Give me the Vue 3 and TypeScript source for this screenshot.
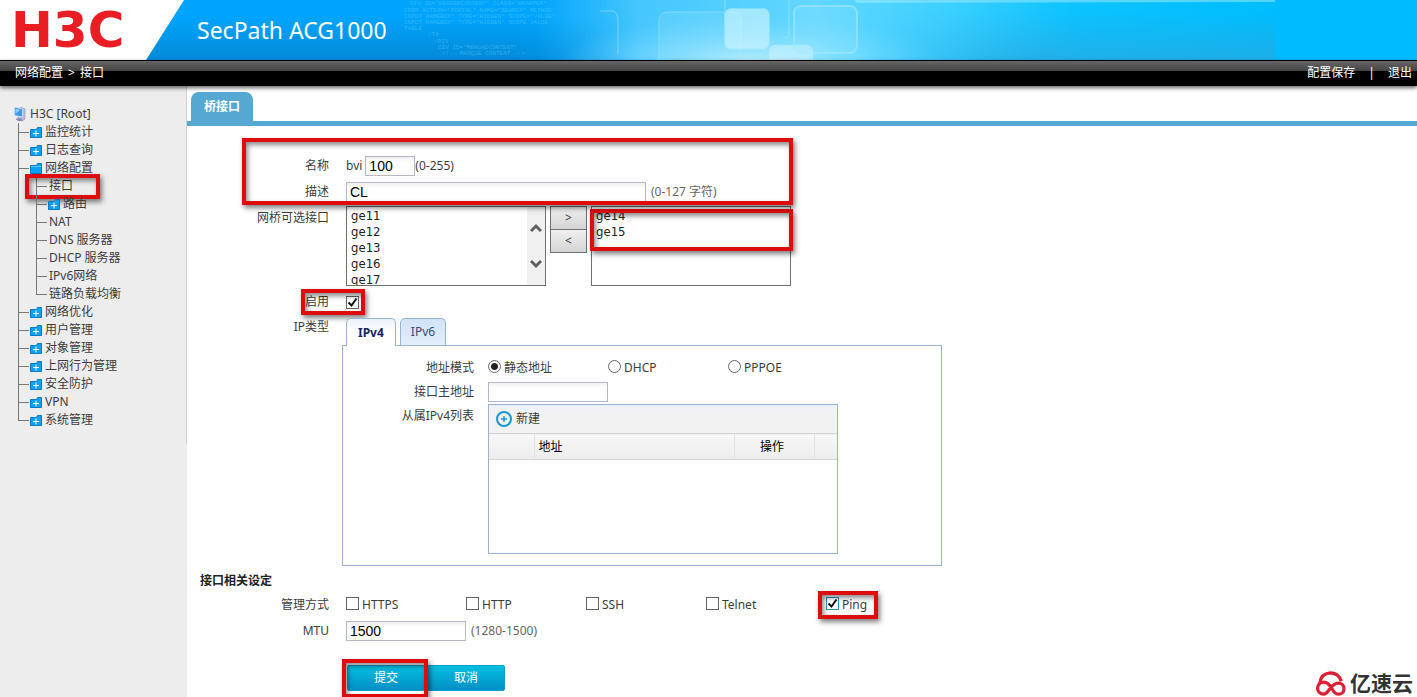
<script setup lang="ts">
import { ref } from 'vue'

interface TreeNode {
  label: string
  folder: boolean
  open?: boolean
  marked?: boolean
  children?: TreeNode[]
}

const tree: TreeNode[] = [
  { label: '监控统计', folder: true },
  { label: '日志查询', folder: true },
  {
    label: '网络配置',
    folder: true,
    open: true,
    children: [
      { label: '接口', folder: false, marked: true },
      { label: '路由', folder: true },
      { label: 'NAT', folder: false },
      { label: 'DNS 服务器', folder: false },
      { label: 'DHCP 服务器', folder: false },
      { label: 'IPv6网络', folder: false },
      { label: '链路负载均衡', folder: false },
    ],
  },
  { label: '网络优化', folder: true },
  { label: '用户管理', folder: true },
  { label: '对象管理', folder: true },
  { label: '上网行为管理', folder: true },
  { label: '安全防护', folder: true },
  { label: 'VPN', folder: true },
  { label: '系统管理', folder: true },
]

const bridgeId = ref('100')
const description = ref('CL')
const available = ['ge11', 'ge12', 'ge13', 'ge16', 'ge17']
const selected = ['ge14', 'ge15']
const enabled = ref(true)
const ipTab = ref('IPv4')
const modes = ['静态地址', 'DHCP', 'PPPOE']
const mode = ref('静态地址')
const primaryAddress = ref('')
const services = ['HTTPS', 'HTTP', 'SSH', 'Telnet', 'Ping']
const activeServices = ref<string[]>(['Ping'])
const mtu = ref('1500')
</script>

<template>
  <div class="page">
    <header class="banner">
      <svg class="art" viewBox="0 0 1275 60" width="1275" height="60" aria-hidden="true">
        <defs>
          <linearGradient id="sky" x1="0" x2="1" y1="0" y2="0">
            <stop offset="0" stop-color="#00a4fc" />
            <stop offset=".42" stop-color="#00a4fc" />
            <stop offset=".5" stop-color="#45c6fd" />
            <stop offset=".64" stop-color="#62d7ff" />
            <stop offset=".74" stop-color="#3dd0ff" />
            <stop offset=".84" stop-color="#0cc3ff" />
            <stop offset="1" stop-color="#00bdfd" />
          </linearGradient>
          <linearGradient id="shade" x1="0" x2="0" y1="0" y2="1">
            <stop offset=".3" stop-color="#0678bd" stop-opacity="0" />
            <stop offset="1" stop-color="#0678bd" stop-opacity=".6" />
          </linearGradient>
          <linearGradient id="shadeRight" x1="0" x2="0" y1="0" y2="1">
            <stop offset=".2" stop-color="#2aa7df" stop-opacity="0" />
            <stop offset="1" stop-color="#2aa7df" stop-opacity=".7" />
          </linearGradient>
          <radialGradient id="glow">
            <stop offset="0" stop-color="#c9f3fb" stop-opacity=".85" />
            <stop offset="1" stop-color="#7bdcff" stop-opacity="0" />
          </radialGradient>
          <linearGradient id="fade" x1="0" x2="1" y1="0" y2="0">
            <stop offset="0" stop-color="#fff" />
            <stop offset=".8" stop-color="#fff" />
            <stop offset="1" stop-color="#000" />
          </linearGradient>
          <linearGradient id="fadeIn" x1="0" x2="1" y1="0" y2="0">
            <stop offset="0" stop-color="#000" />
            <stop offset=".4" stop-color="#fff" />
          </linearGradient>
          <mask id="leftMask"><rect width="640" height="60" fill="url(#fade)" /></mask>
          <mask id="rightMask"><rect x="860" width="415" height="60" fill="url(#fadeIn)" /></mask>
        </defs>
        <rect width="1275" height="60" fill="url(#sky)" />
        <rect width="640" height="60" fill="url(#shade)" mask="url(#leftMask)" />
        <rect x="860" width="415" height="60" fill="url(#shadeRight)" mask="url(#rightMask)" />
        <ellipse cx="750" cy="62" rx="190" ry="48" fill="url(#glow)" />
        <g fill="#a6eaff" fill-opacity=".18" stroke="#a6eaff" stroke-opacity=".55">
          <path d="M600 11h12q6 1 6 9v34" fill="none" />
          <rect x="659" y="12" width="82" height="70" rx="8" />
          <path d="M725 0v12M789 0v34q0 4-6 4" fill="none" />
          <rect x="725" y="9" width="44" height="40" rx="6" fill="#d6f6ff" fill-opacity=".6" stroke-width="2" />
          <rect x="769" y="45" width="44" height="36" rx="6" fill="#d6f6ff" fill-opacity=".5" />
          <rect x="794" y="6" width="63" height="47" rx="7" stroke-width="2" />
          <path d="M855 0q0 3 5 3l415-1V0z" stroke="none" fill-opacity=".5" />
        </g>
        <g class="code">
          <text x="410" y="5">DIV ID="HEADERCONTENT" CLASS="WRAPPER"</text>
          <text x="404" y="12">FORM ACTION="PORTAL" NAME="SEARCH" METHOD</text>
          <text x="404" y="18">INPUT NAMEBOX" TYPE="HIDDEN" SCOPE="VALUE"</text>
          <text x="404" y="24">INPUT NAMEBOX" TYPE="HIDDEN" SCOPE VALUE</text>
          <text x="404" y="30">TABLE</text>
          <text x="428" y="36">/TA</text>
          <text x="434" y="43">/DIV</text>
          <text x="438" y="49">DIV ID="MENUADCONTENT"</text>
          <text x="442" y="55">&lt;!-- MARQUE CONTENT --&gt;</text>
        </g>
      </svg>
      <div class="logo">H3C</div>
      <h1 class="product">SecPath ACG1000</h1>
    </header>

    <nav class="bar">
      <div class="crumbs"><span>网络配置</span><span>&gt;</span><span>接口</span></div>
      <div class="actions">
        <a href="#save">配置保存</a>
        <span class="divider">|</span>
        <a href="#logout">退出</a>
      </div>
    </nav>

    <div class="body">
      <aside class="side">
        <div class="side-inner">
          <div class="root">
            <svg width="14" height="16" viewBox="0 0 14 16" aria-hidden="true">
              <path d="M8 1l4 2v10l-3 2-4-2z" fill="#b9bdd6" stroke="#8a90b4" stroke-width=".6" />
              <path d="M1.500 1.500l8 1v8.500l-8-1.500z" fill="#3f96ee" stroke="#c5d8f2" />
              <path d="M2.500 3l5 .7-5 4z" fill="#91ccff" />
              <path d="M4 12l4 .5 2 2-4 .8-3-1.500z" fill="#8788c0" />
            </svg>
            <a href="#root">H3C [Root]</a>
          </div>
          <ul class="tree">
            <li v-for="node in tree" :key="node.label">
              <div class="node">
                <svg class="folder" width="12" height="11" viewBox="0 0 12 11" aria-hidden="true">
                  <path d="M.5 2.500h6l1-2h4v10H.5z" fill="#0ba2f5" stroke="#0779c8" />
                  <path v-if="!node.open" d="M3 6.500h6M6 3.500v6" stroke="#fff" />
                  <path v-else d="M1 3.500h10" stroke="#5bc9ff" />
                </svg>
                <a href="#node">{{ node.label }}</a>
              </div>
              <ul v-if="node.children" class="tree sub">
                <li v-for="child in node.children" :key="child.label">
                  <div class="node" :class="{ leaf: !child.folder }">
                    <svg v-if="child.folder" class="folder" width="12" height="11" viewBox="0 0 12 11" aria-hidden="true">
                      <path d="M.5 2.500h6l1-2h4v10H.5z" fill="#0ba2f5" stroke="#0779c8" />
                      <path d="M3 6.500h6M6 3.500v6" stroke="#fff" />
                    </svg>
                    <a href="#node">{{ child.label }}</a>
                    <span v-if="child.marked" class="mark mark-node"></span>
                  </div>
                </li>
              </ul>
            </li>
          </ul>
        </div>
      </aside>

      <main class="main">
        <div class="tabbar"><button type="button" class="page-tab">桥接口</button></div>

        <form class="form" @submit.prevent>
          <div class="identity">
            <span class="mark mark-identity"></span>
            <div class="row">
              <label class="label" for="bvi">名称</label>
              <div class="field">
                <span class="prefix">bvi</span>
                <input id="bvi" v-model="bridgeId" class="text small" type="text" />
                <span>(0-255)</span>
              </div>
            </div>
            <div class="row">
              <label class="label" for="desc">描述</label>
              <div class="field">
                <input id="desc" v-model="description" class="text wide" type="text" />
                <span class="hint">(0-127 字符)</span>
              </div>
            </div>
          </div>

          <div class="row top lists">
            <label class="label" for="available">网桥可选接口</label>
            <div class="field top">
              <div class="listbox">
                <select id="available" multiple size="4">
                  <option v-for="port in available" :key="port">{{ port }}</option>
                </select>
                <div class="scroll" aria-hidden="true">
                  <svg width="12" height="10" viewBox="0 0 12 10"><path d="M1 8l5-5 5 5" /></svg>
                  <svg width="12" height="10" viewBox="0 0 12 10"><path d="M1 2l5 5 5-5" /></svg>
                </div>
              </div>
              <div class="movers">
                <button type="button" aria-label="添加">&gt;</button>
                <button type="button" aria-label="移除">&lt;</button>
              </div>
              <div class="listbox">
                <select aria-label="已选接口" multiple size="4">
                  <option v-for="port in selected" :key="port">{{ port }}</option>
                </select>
                <span class="mark mark-selected"></span>
              </div>
            </div>
          </div>

          <div class="row enable">
            <label class="label" for="enabled">启用</label>
            <div class="field"><input id="enabled" v-model="enabled" type="checkbox" /></div>
            <span class="mark mark-enable"></span>
          </div>

          <div class="row top ip">
            <span class="label">IP类型</span>
            <div class="ip-box">
              <div class="ip-tabs">
                <button
                  v-for="name in ['IPv4', 'IPv6']"
                  :key="name"
                  type="button"
                  :class="{ active: ipTab === name }"
                  @click="ipTab = name"
                >{{ name }}</button>
              </div>
              <div class="panel">
                <div class="row inner">
                  <span class="label">地址模式</span>
                  <div class="field choices">
                    <label v-for="item in modes" :key="item">
                      <input v-model="mode" type="radio" name="mode" :value="item" /><span>{{ item }}</span>
                    </label>
                  </div>
                </div>
                <div class="row inner">
                  <label class="label" for="primary">接口主地址</label>
                  <div class="field"><input id="primary" v-model="primaryAddress" class="text medium" type="text" /></div>
                </div>
                <div class="row inner top">
                  <span class="label">从属IPv4列表</span>
                  <div class="grid">
                    <button type="button" class="create">
                      <svg width="16" height="16" viewBox="0 0 16 16" fill="none" stroke="#1798cc" aria-hidden="true">
                        <circle cx="8" cy="8" r="7" stroke-width="2" />
                        <path d="M5 8h6M8 5v6" stroke-width="1.500" />
                      </svg>
                      新建
                    </button>
                    <table>
                      <thead>
                        <tr>
                          <th class="c-index"></th>
                          <th class="c-address">地址</th>
                          <th class="c-action">操作</th>
                          <th></th>
                        </tr>
                      </thead>
                    </table>
                  </div>
                </div>
              </div>
            </div>
          </div>

          <h2 class="section">接口相关设定</h2>

          <div class="row">
            <span class="label">管理方式</span>
            <div class="field choices">
              <label v-for="item in services" :key="item">
                <input v-model="activeServices" type="checkbox" :value="item" /><span>{{ item }}</span>
                <span v-if="item === 'Ping'" class="mark mark-ping"></span>
              </label>
            </div>
          </div>
          <div class="row">
            <label class="label" for="mtu">MTU</label>
            <div class="field">
              <input id="mtu" v-model="mtu" class="text medium" type="text" />
              <span class="hint">(1280-1500)</span>
            </div>
          </div>

          <div class="buttons">
            <div class="submit">
              <button type="submit">提交</button>
              <span class="mark mark-submit"></span>
            </div>
            <button type="button">取消</button>
          </div>
        </form>
      </main>
    </div>

    <div class="watermark">
      <svg width="36" height="26" viewBox="0 0 36 28" fill="none" stroke="#dc1f35" stroke-width="3.500" aria-hidden="true">
        <path d="M6 13Q7 3 17 2q9 0 12 9" />
        <path d="M19 19q-4-7-9-7a6.500 6.500 0 1 0 0 13c6 0 7-12 16-12a6 6 0 1 1 0 12c-3 0-5-2-7-6" />
      </svg>
      <span>亿速云</span>
    </div>
  </div>
</template>

<style>
body {
  margin: 0;
  overflow: hidden;
}
</style>

<style scoped>
.page {
  position: relative;
  display: flex;
  flex-direction: column;
  height: 100vh;
  overflow: hidden;
  background: #fff;
  color: #3c3c3c;
  font: 12px/18px "Noto Sans", "Noto Sans CJK SC", sans-serif;
}
.page *,
.page *::before,
.page *::after {
  box-sizing: border-box;
}
button,
input,
select {
  font: inherit;
  color: inherit;
  margin: 0;
}
a {
  color: inherit;
  text-decoration: none;
}

.banner {
  position: relative;
  display: flex;
  flex: none;
  align-items: center;
  height: 60px;
  overflow: hidden;
  background: #00bbff;
}
.art {
  position: absolute;
  left: 0;
  top: 0;
}
.code {
  fill: #6fd2ff;
  fill-opacity: 0.45;
  font: 6px "Liberation Mono", monospace;
}
.logo {
  position: relative;
  width: 184px;
  height: 60px;
  padding-left: 11px;
  background: #fff;
  clip-path: polygon(0 0, 100% 0, 146px 100%, 0 100%);
  color: #ea1c24;
  font: bold 50px/60px "DejaVu Sans", sans-serif;
}
.product {
  position: relative;
  margin: 0 0 0 13px;
  color: #fff;
  font-size: 23px;
  font-weight: 400;
  line-height: 60px;
}

.bar {
  position: relative;
  z-index: 1;
  display: flex;
  flex: none;
  justify-content: space-between;
  height: 26px;
  padding: 3px 5px 0 15px;
  border-top: 1px solid #000;
  background: linear-gradient(#666, #444 10px, #000 10px);
  box-shadow: 0 2px 4px rgba(0, 0, 0, 0.6);
  color: #fff;
}
.crumbs {
  display: flex;
  gap: 5px;
}
.actions {
  display: flex;
  gap: 13px;
}

.body {
  display: flex;
  flex: 1;
  min-height: 0;
}
.side {
  flex: none;
  width: 187px;
  background: #ededed;
}
.side-inner {
  height: 358px;
  padding: 19px 0 0 13px;
  border-right: 1px solid #d0d0d0;
}
.root {
  display: flex;
  align-items: center;
  gap: 3px;
  height: 18px;
}
.tree {
  margin: 0 0 0 5px;
  padding: 0;
  list-style: none;
}
.tree li {
  position: relative;
  padding-left: 12px;
}
.tree li::before {
  content: "";
  position: absolute;
  left: 0;
  top: 0;
  bottom: 0;
  border-left: 1px solid #777;
}
.tree li:last-child::before {
  bottom: auto;
  height: 9px;
}
.tree li::after {
  content: "";
  position: absolute;
  left: 0;
  top: 9px;
  width: 11px;
  border-top: 1px solid #777;
}
.tree.sub {
  margin-left: 6px;
}
.node {
  position: relative;
  display: flex;
  align-items: center;
  gap: 3px;
  height: 18px;
}
.leaf {
  padding-left: 1px;
}

.main {
  flex: 1;
  min-width: 0;
}
.tabbar {
  height: 40px;
  padding: 6px 4px 0;
  border-bottom: 5px solid #56a8d2;
}
.page-tab {
  display: block;
  width: 62px;
  height: 30px;
  padding: 0;
  border: 0;
  border-radius: 8px 8px 0 0;
  background: #56a8d2;
  color: #fff;
  font-weight: 700;
}

.form {
  padding-top: 27px;
}
.row {
  position: relative;
  display: flex;
  align-items: center;
  gap: 17px;
  min-height: 26px;
}
.row.top,
.field.top {
  align-items: flex-start;
}
.label {
  flex: none;
  width: 142px;
  text-align: right;
}
.field {
  display: flex;
  align-items: center;
}
.identity {
  position: relative;
}
.prefix {
  margin-right: 3px;
}
.hint {
  margin-left: 5px;
  color: #666;
}
.text {
  height: 20px;
  padding: 0 3px;
  border: 1px solid #b5b8c8;
  background: linear-gradient(#f0f0f2, #fff 5px);
  color: #000;
  font: 14px/18px "Liberation Sans", Arial, sans-serif;
}
.small {
  width: 50px;
}
.medium {
  width: 120px;
}
.wide {
  width: 300px;
}

.lists {
  padding-top: 1px;
}
.lists .label,
.inner.top .label {
  padding-top: 3px;
}
.listbox {
  position: relative;
  display: flex;
  width: 200px;
  height: 80px;
  border: 1px solid #707070;
  background: #fff;
}
.listbox select {
  flex: 1;
  min-width: 0;
  height: 78px;
  padding: 1px;
  border: 0;
  outline: 0;
  overflow: hidden;
  background: transparent;
  color: #222;
  font: 13px/16px "DejaVu Sans Condensed", "DejaVu Sans", sans-serif;
}
.listbox option {
  min-height: 16px;
  padding: 0 3px;
}
.scroll {
  display: flex;
  flex-direction: column;
  align-items: center;
  justify-content: center;
  gap: 26px;
  width: 18px;
  background: #f0f0f0;
}
.scroll path {
  fill: none;
  stroke: #606060;
  stroke-width: 3;
}
.movers {
  display: flex;
  flex-direction: column;
  width: 37px;
  margin: 0 4px;
}
.movers button {
  height: 24px;
  padding: 0;
  border: 1px solid #707070;
  background: linear-gradient(#f0f0f0, #d4d4d4);
}
.movers button + button {
  margin-top: -1px;
}
.enable {
  margin-top: 3px;
}

input[type="checkbox"],
input[type="radio"] {
  flex: none;
  width: 13px;
  height: 13px;
  appearance: none;
  border: 1px solid #666;
  background: #fff;
}
input[type="checkbox"]:checked {
  background: #fff
    url("data:image/svg+xml,%3Csvg xmlns='http://www.w3.org/2000/svg' viewBox='0 0 11 11'%3E%3Cpath d='M1.500 5.500l3 3 5-7' fill='none' stroke='%23111' stroke-width='2'/%3E%3C/svg%3E");
}
input[type="radio"] {
  border-radius: 50%;
}
input[type="radio"]:checked {
  background: radial-gradient(circle, #222 3px, #fff 4px);
}
.choices label {
  position: relative;
  display: flex;
  align-items: center;
  gap: 3px;
  width: 120px;
}
.choices input {
  margin-bottom: 3px;
}
.choices input[type="checkbox"]:checked {
  border-color: #2a93c9;
}

.ip {
  gap: 13px;
  margin-top: 3px;
}
.ip-box {
  width: 600px;
}
.ip-tabs {
  display: flex;
  gap: 4px;
  padding-left: 4px;
}
.ip-tabs button {
  height: 27px;
  padding: 0 10px;
  border: 1px solid #99b5d6;
  border-bottom: 0;
  border-radius: 5px 5px 0 0;
  background: linear-gradient(#d2e2f8, #e4eefb);
  color: #314a7c;
}
.ip-tabs .active {
  position: relative;
  z-index: 1;
  margin-bottom: -1px;
  padding: 0 11px;
  height: 28px;
  background: linear-gradient(#e8f1fc, #fff 12px);
  color: #15246a;
  font-weight: 700;
}
.panel {
  height: 221px;
  padding-top: 10px;
  border: 1px solid #99b5d6;
}
.inner {
  gap: 14px;
  min-height: 24px;
}
.inner .label {
  width: 131px;
}
.grid {
  width: 350px;
  height: 150px;
  border: 1px solid #99b5d6;
}
.create {
  display: flex;
  align-items: center;
  gap: 4px;
  width: 100%;
  height: 28px;
  padding: 0 7px;
  border: 0;
  background: linear-gradient(#e9f1fb, #f2f2f3 6px);
}
table {
  width: 100%;
  border-collapse: collapse;
  table-layout: fixed;
}
th {
  height: 26px;
  padding: 0 4px;
  border: 1px solid #d4d4d8;
  border-width: 1px 1px 1px 0;
  border-right-color: #e2e2e2;
  background: linear-gradient(#f8f8f8, #ececec);
  color: #000;
  font-weight: 400;
  text-align: left;
}
th:last-child {
  border-right: 0;
}
.c-index {
  width: 45px;
}
.c-address {
  width: 200px;
}
.c-action {
  width: 80px;
  padding-right: 8px;
  text-align: center;
}

.section {
  margin: 6px 0 2px 13px;
  color: #222;
  font-size: 12px;
  line-height: 18px;
}
.buttons {
  display: flex;
  gap: 2px;
  margin: 21px 0 0 160px;
}
.buttons button {
  display: block;
  width: 78px;
  height: 26px;
  padding: 0;
  border: 1px solid #0e9cc8;
  border-radius: 2px;
  background: linear-gradient(#06bfe0, #028fc6);
  color: #fff;
}
.submit {
  position: relative;
}

.mark {
  position: absolute;
  border: 4px solid #de0d0d;
  pointer-events: none;
  box-shadow: 2px 3px 5px rgba(0, 0, 0, 0.5), inset 2px 3px 5px rgba(0, 0, 0, 0.45);
}
.mark-node {
  inset: -3px auto auto -23px;
  width: 75px;
  height: 25px;
}
.mark-identity {
  z-index: 1;
  left: 55px;
  top: -15px;
  width: 551px;
  height: 67px;
}
.mark-selected {
  inset: 2px -3px 34px -2px;
}
.mark-enable {
  left: 114px;
  top: 0;
  width: 64px;
  height: 26px;
}
.mark-ping {
  left: -8px;
  top: -5px;
  width: 60px;
  height: 28px;
}
.mark-submit {
  inset: -6px -3px -7px -5px;
}

.watermark {
  position: absolute;
  right: 4px;
  bottom: 0;
  display: flex;
  align-items: center;
  gap: 1px;
  color: #333;
  font: 700 21px/24px "Liberation Sans", "Noto Sans CJK SC", sans-serif;
}
</style>
